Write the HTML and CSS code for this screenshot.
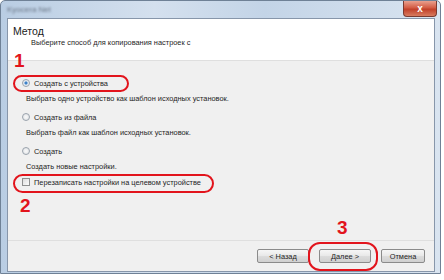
FILE: index.html
```html
<!DOCTYPE html>
<html lang="ru">
<head>
  <meta charset="UTF-8">
  <title>Метод</title>
  <link rel="stylesheet" href="styles.css">
</head>
<body>
  <div class="window">
    <div class="titlebar">
      <span class="title-text">Kyocera Net</span>
      <button class="close-btn">x</button>
    </div>
    <div class="client">
      <div class="header">
        <h1>Метод</h1>
        <p>Выберите способ для копирования настроек с</p>
      </div>

      <div class="options">
        <div class="option">
          <label class="radio-line"><span class="radio checked"></span>Создать с устройства</label>
          <p class="desc">Выбрать одно устройство как шаблон исходных установок.</p>
        </div>
        <div class="option">
          <label class="radio-line"><span class="radio"></span>Создать из файла</label>
          <p class="desc">Выбрать файл как шаблон исходных установок.</p>
        </div>
        <div class="option">
          <label class="radio-line"><span class="radio"></span>Создать</label>
          <p class="desc">Создать новые настройки.</p>
        </div>
        <label class="check-line"><span class="checkbox"></span>Перезаписать настройки на целевом устройстве</label>
      </div>

      <div class="footer">
        <button class="btn">&lt; Назад</button>
        <button class="btn">Далее &gt;</button>
        <button class="btn cancel">Отмена</button>
      </div>
    </div>
  </div>

  <!-- callouts -->
  <span class="step step-1">1</span>
  <span class="step step-2">2</span>
  <span class="step step-3">3</span>
  <span class="ring ring-1"></span>
  <span class="ring ring-2"></span>
  <span class="ring ring-3"></span>
</body>
</html>
```

FILE: styles.css
```css
* {
  box-sizing: border-box;
  margin: 0;
  padding: 0;
}

body {
  width: 444px;
  height: 280px;
  background: #fff;
  font-family: "Liberation Sans", Arial, sans-serif;
  color: #1e1e1e;
  position: relative;
  overflow: hidden;
}

.window {
  width: 441px;
  height: 274px;
  display: flex;
  flex-direction: column;
  padding: 0 5px 1px 6px;
  border: 1px solid #6f8196;
  border-radius: 5px 5px 0 0;
  background: linear-gradient(90deg, #b9cde3 0%, #d4e0ee 35%, #c3d4e7 60%, #d9e4f0 100%);
}

.titlebar {
  height: 17px;
  display: flex;
  justify-content: space-between;
  align-items: flex-start;
}

.title-text {
  font-size: 8px;
  color: #6a7686;
  margin-top: 4px;
  filter: blur(1.2px);
}

.close-btn {
  width: 34px;
  height: 16px;
  margin-right: -2px;
  border: 1px solid #7a3a30;
  border-top: none;
  border-radius: 0 0 4px 4px;
  background: linear-gradient(#e9a08e 0%, #d35c44 45%, #c1412a 55%, #d87b5f 100%);
  color: #fff;
  font-size: 10px;
  font-weight: bold;
  line-height: 14px;
}

.client {
  flex: 1;
  display: flex;
  flex-direction: column;
  border: 1px solid #8796aa;
  background: #f0f0f0;
}

.header {
  height: 42px;
  background: #fff;
  border-bottom: 1px solid #dfdfdf;
  padding: 6px 5px 0;
}

.header h1 {
  font-size: 10.5px;
  font-weight: normal;
  line-height: 12px;
  color: #1a1a1a;
}

.header p {
  font-size: 7.4px;
  line-height: 10px;
  padding-left: 18px;
  margin-top: 1px;
}

.options {
  flex: 1;
  padding: 16px 0 0 14px;
  font-size: 7.4px;
}

.option {
  margin-bottom: 6px;
}

.radio-line,
.check-line {
  display: flex;
  align-items: center;
  height: 12px;
  gap: 4px;
}

.radio {
  width: 8px;
  height: 8px;
  border-radius: 50%;
  border: 1px solid #9aa3ad;
  background: radial-gradient(circle, #fafafa 0%, #dcdfe3 100%);
}

.radio.checked {
  background: radial-gradient(circle, #2f6fb4 0%, #4b8fd4 30%, #e2e8ef 45%, #f5f5f5 100%);
}

.desc {
  height: 12px;
  line-height: 12px;
  margin-top: 4px;
  padding-left: 4px;
}

.check-line {
  margin-top: -3px;
}

.checkbox {
  width: 8px;
  height: 8px;
  border: 1px solid #8e8f8f;
  background: linear-gradient(135deg, #dcdcdc, #fbfbfb);
}

.footer {
  height: 31px;
  border-top: 1px solid #dfdfdf;
  display: flex;
  justify-content: flex-end;
  align-items: flex-start;
  gap: 10px;
  padding: 8px 9px 0 0;
}

.btn {
  width: 52px;
  height: 14px;
  border: 1px solid #8b8b8b;
  border-radius: 2px;
  background: linear-gradient(#f6f6f6 0%, #e8e8e8 50%, #dcdcdc 51%, #d0d0d0 100%);
  font-family: "Liberation Sans", Arial, sans-serif;
  font-size: 7.4px;
  color: #1e1e1e;
}

.btn.cancel {
  width: 44px;
}

.step {
  position: absolute;
  color: #e2141c;
  font-weight: bold;
  font-size: 19px;
  line-height: 19px;
}

.step-1 { left: 14px; top: 51px; }
.step-2 { left: 20px; top: 196px; }
.step-3 { left: 337px; top: 218px; }

.ring {
  position: absolute;
  border: 2.5px solid #e2141c;
  border-radius: 10px;
}

.ring-1 { left: 13px; top: 75px; width: 116px; height: 17px; }
.ring-2 { left: 13px; top: 174px; width: 201px; height: 19px; }
.ring-3 { left: 308px; top: 242px; width: 70px; height: 29px; border-radius: 12px; }
```
